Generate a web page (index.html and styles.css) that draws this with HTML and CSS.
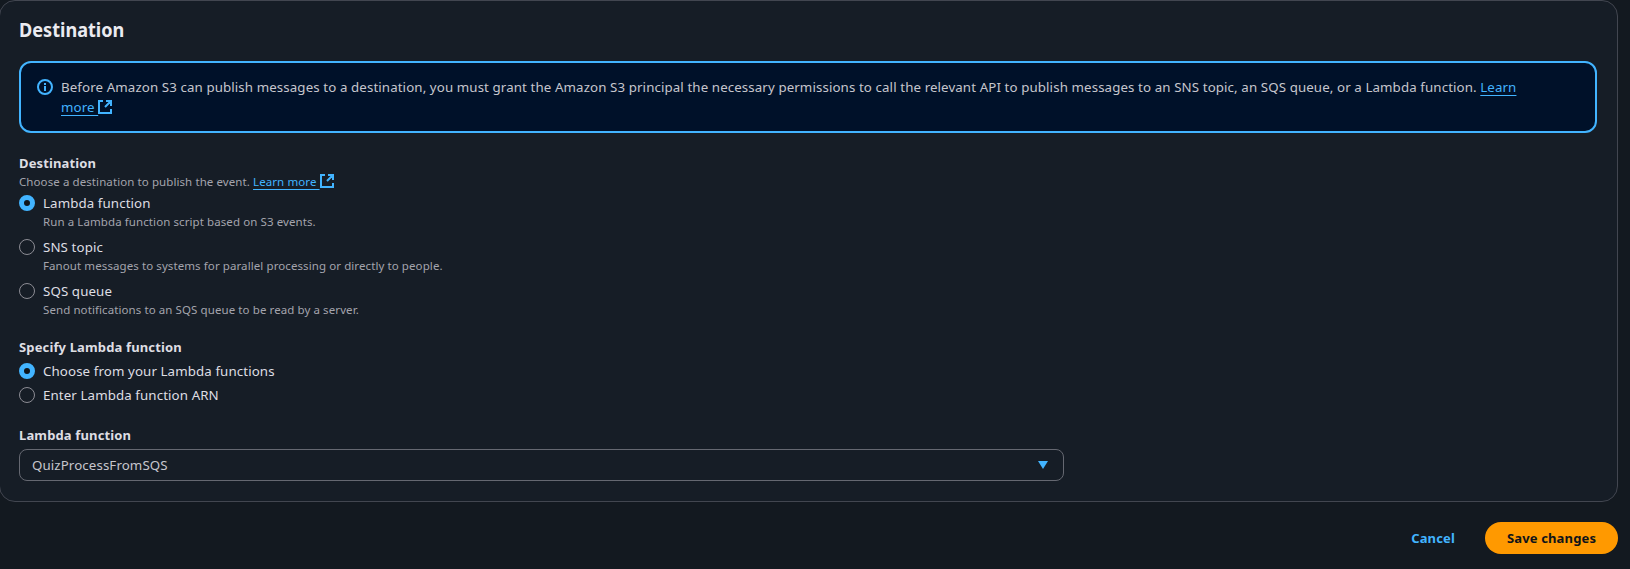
FILE: index.html
```html
<!DOCTYPE html>
<html lang="en">
<head>
<meta charset="utf-8">
<title>Destination</title>
<link rel="stylesheet" href="styles.css">
</head>
<body>
<main class="panel">
  <h2 class="panel-title">Destination</h2>
  <div class="alert">
    <svg class="info-icon" viewBox="0 0 16 16" fill="none" stroke="currentColor" stroke-width="2"><circle cx="8" cy="8" r="7"/><path d="M8 12V7M8 4v2"/></svg>
    <p class="alert-text">Before Amazon S3 can publish messages to a destination, you must grant the Amazon S3 principal the necessary permissions to call the relevant API to publish messages to an SNS topic, an SQS queue, or a Lambda function. <a class="link">Learn<br>more&nbsp;</a><svg class="external" viewBox="0 0 14 14" fill="none" stroke="currentColor" stroke-width="2"><path d="M5 1H1v12h12V9M8 1h5v5M13 1L7 7"/></svg></p>
  </div>

  <section class="field">
    <h3 class="label">Destination</h3>
    <p class="hint">Choose a destination to publish the event. <a class="link">Learn more&nbsp;</a><svg class="external" viewBox="0 0 14 14" fill="none" stroke="currentColor" stroke-width="2"><path d="M5 1H1v12h12V9M8 1h5v5M13 1L7 7"/></svg></p>
    <div class="options">
      <div class="option"><span class="radio checked"></span><div><p class="option-name">Lambda function</p><p class="hint">Run a Lambda function script based on S3 events.</p></div></div>
      <div class="option"><span class="radio"></span><div><p class="option-name">SNS topic</p><p class="hint">Fanout messages to systems for parallel processing or directly to people.</p></div></div>
      <div class="option"><span class="radio"></span><div><p class="option-name">SQS queue</p><p class="hint">Send notifications to an SQS queue to be read by a server.</p></div></div>
    </div>
  </section>

  <section class="field">
    <h3 class="label">Specify Lambda function</h3>
    <div class="options compact">
      <div class="option"><span class="radio checked"></span><p class="option-name">Choose from your Lambda functions</p></div>
      <div class="option"><span class="radio"></span><p class="option-name">Enter Lambda function ARN</p></div>
    </div>
  </section>

  <section class="field">
    <h3 class="label">Lambda function</h3>
    <div class="select"><span>QuizProcessFromSQS</span><svg class="caret" viewBox="0 0 10 8"><path d="M0 0h10L5 8z" fill="currentColor"/></svg></div>
  </section>
</main>
<footer class="actions">
  <button class="button cancel">Cancel</button>
  <button class="button save">Save changes</button>
</footer>
</body>
</html>
```
FILE: styles.css
```css
* { box-sizing: border-box; }
body {
  margin: 0;
  height: 569px;
  overflow: hidden;
  background: #131920;
  color: #dedee3;
  font: 13.3px/20px "Noto Sans", sans-serif;
  letter-spacing: 0.105px;
}
h2, h3, p { margin: 0; }
.panel {
  width: 1619px;
  height: 502px;
  margin-left: -1px;
  padding: 17px 20px 19px 19px;
  background: #161d26;
  border: 1px solid #424650;
  border-radius: 16px;
}
.panel-title {
  font-size: 20px;
  line-height: 24px;
  letter-spacing: 0;
  transform: scaleX(0.905);
  transform-origin: left;
  color: #ebebf0;
}
.alert {
  display: flex;
  gap: 8px;
  width: 1578px;
  height: 72px;
  margin: 19px 0 20px;
  padding: 14px 16px;
  border: 2px solid #42b4ff;
  border-radius: 12px;
  background: #001129;
  color: #c6c6cd;
}
.info-icon {
  flex: none;
  width: 16px;
  height: 16px;
  margin-top: 2px;
  color: #42b4ff;
}
.alert-text { white-space: nowrap; }
.link {
  color: #42b4ff;
  text-decoration: underline;
  text-decoration-thickness: 1px;
  text-underline-offset: 3px;
}
.external {
  width: 14px;
  height: 14px;
  vertical-align: -2px;
  color: #42b4ff;
}
.field { margin-bottom: 20px; }
.label { font-size: 13px; line-height: 20px; letter-spacing: 0.14px; }
.hint {
  height: 16px;
  font-size: 11.5px;
  line-height: 18px;
  letter-spacing: 0.09px;
  color: #a4a4ad;
}
.options { display: grid; gap: 8px; margin-top: 4px; }
.compact { gap: 4px; }
.option { display: flex; gap: 8px; }
.radio {
  flex: none;
  width: 16px;
  height: 16px;
  margin-top: 2px;
  border: 1px solid #8c8c94;
  border-radius: 50%;
}
.checked { border: 5px solid #42b4ff; background: #0f141a; }
.select {
  display: flex;
  align-items: center;
  justify-content: space-between;
  width: 1045px;
  height: 32px;
  margin-top: 4px;
  padding: 0 15px 0 12px;
  border: 1px solid #656871;
  border-radius: 8px;
  color: #c6c6cd;
}
.caret { width: 10px; height: 8px; color: #42b4ff; }
.actions {
  display: flex;
  justify-content: flex-end;
  gap: 8px;
  width: 1618px;
  padding-top: 20px;
}
.button {
  height: 32px;
  padding: 0 22px;
  border: 0;
  border-radius: 20px;
  background: none;
  font: bold 13px/20px "Noto Sans", sans-serif;
  letter-spacing: 0.15px;
  white-space: nowrap;
}
.cancel { color: #42b4ff; }
.save { width: 133px; padding: 0; background: #ff9900; color: #0f141a; }
```
